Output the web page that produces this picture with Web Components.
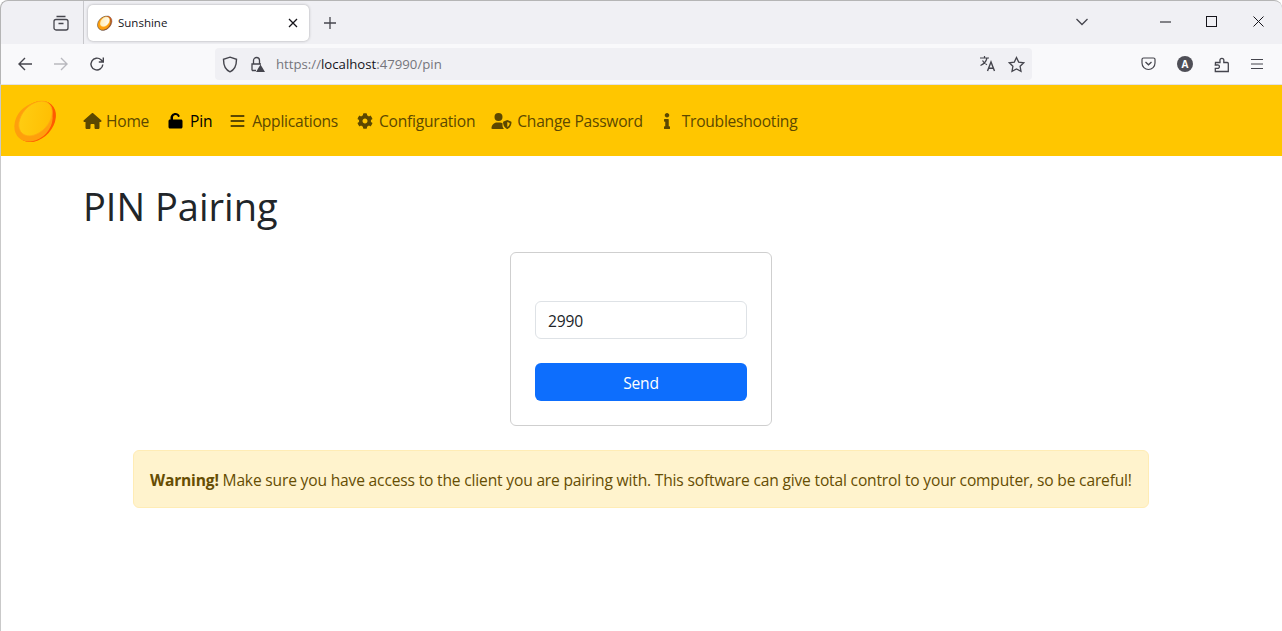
<!doctype html>
<html><head><meta charset="utf-8"><title>Sunshine</title>
<style>
html,body{margin:0;height:100%;background:#fff;overflow:hidden}
body{font-family:"Open Sans","Noto Sans",sans-serif;display:flex;flex-direction:column;height:631px;box-sizing:border-box}
</style></head><body>
<browser-chrome></browser-chrome>
<app-nav>
  <nav-link icon="home">Home</nav-link>
  <nav-link icon="unlock" active>Pin</nav-link>
  <nav-link icon="bars">Applications</nav-link>
  <nav-link icon="cog">Configuration</nav-link>
  <nav-link icon="user">Change Password</nav-link>
  <nav-link icon="info">Troubleshooting</nav-link>
</app-nav>
<pin-page></pin-page>
<script>
const logo=(id,inner1,inner2,rx=20,ry=13.5,cy=20.5)=>`<svg viewBox="0 0 44 46" width="100%" height="100%"><defs><linearGradient id="${id}" x1="0" y1="0" x2="1" y2="1"><stop offset="0" stop-color="${inner1}"/><stop offset="1" stop-color="${inner2}"/></linearGradient></defs>
<ellipse cx="22" cy="23.500" rx="23" ry="17" transform="rotate(-48 22 23.500)" fill="#ff5a00"/>
<ellipse cx="19.500" cy="24" rx="21.500" ry="17" transform="rotate(-48 19.500 24)" fill="#ff9f0c"/>
<ellipse cx="21.500" cy="${cy}" rx="${rx}" ry="${ry}" transform="rotate(-48 21.500 ${cy})" fill="url(#${id})" stroke="#ffa90f" stroke-width=".8"/></svg>`;
const ICONS={
home:['0 0 576 512','<path d="M575.8 255.5c0 18-15 32.100-32 32.100h-32l.7 160.200c0 2.700-.2 5.400-.5 8.100V472c0 22.100-17.900 40-40 40H456c-1.100 0-2.200 0-3.300-.1c-1.400 .1-2.800 .1-4.200 .1H416 392c-22.100 0-40-17.900-40-40V448 384c0-17.700-14.300-32-32-32H256c-17.700 0-32 14.300-32 32v64 24c0 22.100-17.900 40-40 40H160 128.100c-1.500 0-3-.1-4.500-.2c-1.200 .1-2.400 .2-3.600 .2H104c-22.100 0-40-17.900-40-40V360c0-.9 0-1.900 .1-2.800V287.600H32c-18 0-32-14-32-32.100c0-9 3-17 10-24L266.400 8c7-7 15-8 22-8s15 2 21 7L564.800 231.500c8 7 12 15 11 24z"/>',19],
unlock:['0 0 448 512','<path d="M144 144c0-44.200 35.800-80 80-80c31.900 0 59.400 18.600 72.300 45.700c7.600 16 26.700 22.800 42.600 15.200s22.800-26.700 15.200-42.600C331 33.700 281.500 0 224 0C135.600 0 64 71.600 64 160v48H48c-26.500 0-48 21.500-48 48V448c0 26.500 21.500 48 48 48H400c26.500 0 48-21.500 48-48V256c0-26.500-21.500-48-48-48H144V144z"/>',15],
bars:['0 0 448 512','<path d="M0 96c0-17.700 14.300-32 32-32H416c17.700 0 32 14.300 32 32s-14.300 32-32 32H32C14.300 128 0 113.700 0 96zM0 256c0-17.700 14.300-32 32-32H416c17.700 0 32 14.300 32 32s-14.300 32-32 32H32c-17.700 0-32-14.300-32-32zM448 416c0 17.700-14.300 32-32 32H32c-17.700 0-32-14.300-32-32s14.300-32 32-32H416c17.700 0 32 14.300 32 32z"/>',15],
cog:['0 0 512 512','<path d="M487.4 315.7l-42.600-24.600c4.300-23.200 4.300-47 0-70.200l42.600-24.600c4.900-2.800 7.100-8.600 5.500-14-11.100-35.600-30-67.800-54.700-94.600-3.800-4.100-10-5.100-14.800-2.300L380.8 110c-17.900-15.400-38.500-27.300-60.800-35.100V25.800c0-5.600-3.900-10.500-9.400-11.700-36.700-8.200-74.300-7.800-109.200 0-5.500 1.200-9.400 6.100-9.400 11.700V75c-22.200 7.900-42.800 19.800-60.800 35.100L88.700 85.500c-4.900-2.800-11-1.900-14.800 2.300-24.700 26.700-43.600 58.900-54.700 94.600-1.700 5.400.6 11.200 5.500 14L67.300 221c-4.300 23.200-4.300 47 0 70.200l-42.600 24.600c-4.900 2.800-7.100 8.600-5.500 14 11.100 35.600 30 67.800 54.700 94.600 3.800 4.100 10 5.100 14.800 2.300l42.600-24.600c17.900 15.400 38.500 27.300 60.800 35.100v49.200c0 5.600 3.900 10.500 9.400 11.700 36.700 8.200 74.300 7.800 109.200 0 5.500-1.200 9.400-6.100 9.400-11.700v-49.200c22.200-7.900 42.800-19.800 60.800-35.100l42.600 24.600c4.900 2.800 11 1.900 14.800-2.300 24.700-26.700 43.600-58.900 54.700-94.600 1.500-5.500-.7-11.300-5.600-14.100zM256 336c-44.100 0-80-35.900-80-80s35.900-80 80-80 80 35.900 80 80-35.900 80-80 80z"/>',16],
user:['0 0 640 512','<circle cx="224" cy="128" r="128"/><path d="M178 304h92c30 0 58 8 82 22v74c0 40 18 78 50 112H30c-17 0-30-13-30-30C0 384 80 304 178 304z"/><path fill-rule="evenodd" d="M505 224l118 47c10 4 17 13 17 24 0 70-30 170-126 214-6 3-13 3-19 0C399 465 370 365 370 295c0-11 7-20 17-24l118-47zm0 62v165c54-30 76-90 78-135l-78-30z"/>',21],
info:['0 0 192 512','<path d="M20 424.200h20V279.800H20c-11 0-20-9-20-20V212c0-11 9-20 20-20h112c11 0 20 9 20 20v212.200h20c11 0 20 9 20 20V492c0 11-9 20-20 20H20c-11 0-20-9-20-20v-47.800c0-11 9-20 20-20zM96 0C56 0 24 32 24 72s32 72 72 72 72-32 72-72S136 0 96 0z"/>',8]
};
class Base extends HTMLElement{
  constructor(){super();this.attachShadow({mode:'open'});}
}
class BrowserChrome extends Base{connectedCallback(){this.shadowRoot.innerHTML=`<style>
:host{display:block;flex:none;color:#15141a;font-family:"Open Sans",sans-serif}
svg{display:block;fill:none;stroke:#45454d;stroke-width:1.300}
.tabs{height:44px;background:#f0f0f4;display:flex;align-items:center;box-sizing:border-box;border-top:1px solid #b5b5b5;border-left:1px solid #b5b5b5;border-radius:8px 8px 0 0}
.tabview{width:83px;align-self:stretch;display:flex;align-items:center;justify-content:flex-end;padding-right:13px;box-sizing:border-box;border-right:1px solid #c8c8cc}
.tab{margin-left:4px;width:221px;height:36px;margin-top:1px;background:#fff;border-radius:5px;box-shadow:0 0 3px rgba(0,0,0,.3);display:flex;align-items:center;padding:0 9px 1px;box-sizing:border-box}
.fav{width:16px;height:16px;flex:none}
.tt{font-size:11.500px;margin-left:5px;flex:1;line-height:14px}
.x{margin-right:1px}
.plus{margin-left:14px}
.sp{flex:1}
.win{display:flex;align-items:center;margin-bottom:2px}
.chev{margin-right:71px}
.w1{margin-right:35px}
.w2{margin-right:36px}
.w3{margin-right:18px}
.bar{height:41px;background:#f9f9fb;display:flex;align-items:center;box-sizing:border-box;border-left:1px solid #b5b5b5;border-bottom:1px solid #e2e2e4}
.back{margin-left:16px}.fwd{margin-left:20px}.rel{margin-left:20px}
.url{margin-left:110px;width:817px;height:32px;background:#f0f0f4;border-radius:4px;display:flex;align-items:center;padding:0 7px 0 7px;box-sizing:border-box;font-size:13.200px;color:#75757c}
.url b{font-weight:400;color:#15141a}
.lock{margin-left:11px}
.addr{margin-left:11px;flex:1;white-space:nowrap}
.tools{display:flex;align-items:center;margin-left:109px}
</style>
<div class="tabs">
 <div class="tabview"><svg width="18" height="18" viewBox="0 0 18 18"><rect x="2" y="5.500" width="14" height="10.500" rx="2"/><path d="M4.500 2.500h9M6.500 9.500h5"/></svg></div>
 <div class="tab"><span class="fav">${logo('g1','#ffe9a8','#fff',16.500,11.500,19.500)}</span><span class="tt">Sunshine</span>
  <svg class="x" width="12" height="12" viewBox="0 0 12 12"><path d="M2 2l8 8M10 2l-8 8" stroke="#15141a"/></svg></div>
 <svg class="plus" width="14" height="14" viewBox="0 0 14 14"><path d="M7 1v12M1 7h12"/></svg>
 <span class="sp"></span>
 <div class="win">
  <svg class="chev" width="14" height="10" viewBox="0 0 14 10"><path d="M1.500 2l5.500 5.500L12.500 2"/></svg>
  <svg class="w1" width="11" height="10" viewBox="0 0 11 10"><path d="M0 5h11" stroke="#15141a" stroke-width="1"/></svg>
  <svg class="w2" width="11" height="11" viewBox="0 0 11 11"><rect x=".5" y=".5" width="10" height="10" stroke="#15141a" stroke-width="1"/></svg>
  <svg class="w3" width="11" height="11" viewBox="0 0 11 11"><path d="M.5.5l10 10M10.500.5l-10 10" stroke="#15141a" stroke-width="1"/></svg>
 </div>
</div>
<div class="bar">
 <svg class="back" width="16" height="16" viewBox="0 0 16 16"><path d="M15 8H2M8 2L2 8l6 6" stroke-width="1.400"/></svg>
 <svg class="fwd" width="16" height="16" viewBox="0 0 16 16"><path d="M1 8h13M8 2l6 6-6 6" stroke="#b9b9bf" stroke-width="1.400"/></svg>
 <svg class="rel" width="16" height="16" viewBox="0 0 16 16"><path d="M13.800 8.500A5.900 5.900 0 1 1 12 3.800L14 6M14.300 1.500V6H9.800" stroke-width="1.400"/></svg>
 <div class="url">
  <svg width="16" height="17" viewBox="0 0 16 17"><path d="M8 1.200l6.500 2.100c0 6-1.500 10.500-6.500 12.500C3 13.800 1.500 9.300 1.500 3.300L8 1.200z" stroke-width="1.400"/></svg>
  <svg class="lock" width="16" height="17" viewBox="0 0 16 17"><path d="M3 14.500V8h9M4.500 8V4.500a3 3 0 0 1 6 0V8M3 14.500h4" stroke-width="1.300"/><path d="M11.500 8.500l4.500 7.500H7z" fill="#45454d" stroke="none"/></svg>
  <span class="addr">https://<b>localhost</b>:47990/pin</span>
  <svg width="18" height="18" viewBox="0 0 18 18"><path d="M1 3h9M5.500 1v2M8 3c-.8 3.500-3 6-6.500 7.500M3.500 5.500c1 2 2.800 3.500 4.500 4.200" stroke-width="1.200"/><path d="M8.500 16l3.500-9 3.500 9M9.700 13.200h4.600" stroke-width="1.400"/></svg>
  <svg style="margin-left:11px" width="17" height="17" viewBox="0 0 17 17"><path d="M8.500 1.500l2.200 4.600 5 .7-3.600 3.500.9 5-4.500-2.400L4 15.300l.9-5L1.300 6.800l5-.7z" stroke-width="1.300"/></svg>
 </div>
 <div class="tools">
  <svg width="15" height="14" viewBox="0 0 15 14"><path d="M2.500 1h10A1.500 1.500 0 0 1 14 2.500V6a6.500 6.500 0 0 1-13 0V2.500A1.500 1.500 0 0 1 2.500 1z" stroke-width="1.200"/><path d="M4.500 5l3 2.800 3-2.800" stroke-width="1.300"/></svg>
  <svg style="margin-left:21px" width="16" height="16" viewBox="0 0 16 16"><circle cx="8" cy="8" r="8" fill="#4f4f57" stroke="none"/><text x="8" y="11.500" text-anchor="middle" font-size="10" font-weight="700" font-family="Open Sans" fill="#fff" stroke="none">A</text></svg>
  <svg style="margin-left:21px" width="16" height="17" viewBox="0 0 16 17"><path d="M1.500 6.500H6V5a2 2 0 1 1 3.800 0v1.500h3.500a1 1 0 0 1 1 1v8h-13v-3.200h2a1.700 1.700 0 1 0 0-3.300h-2z" stroke-width="1.300"/></svg>
  <svg style="margin-left:20px" width="14" height="12" viewBox="0 0 14 12"><path d="M1 1.500h12M1 6h12M1 10.500h12" stroke-width="1.200"/></svg>
 </div>
</div>`;}}
class AppNav extends Base{connectedCallback(){this.shadowRoot.innerHTML=`<style>
:host{display:flex;flex:none;height:71px;align-items:center;background:#ffc600;padding-left:14px;box-shadow:inset 1px 0 #c9c9c9}
.logo{width:44px;height:46px;margin-right:25px;flex:none}
.links{display:flex;align-items:center}
</style><div class="logo">${logo('g2','#ffcf14','#ffbc00')}</div><div class="links"><slot></slot></div>`;}}
class NavLink extends Base{connectedCallback(){const k=this.getAttribute('icon');const [vb,body,w]=ICONS[k];const a=this.hasAttribute('active');
const gap={home:4,unlock:7,bars:7,cog:6,user:5,info:11};const mr={home:19,unlock:18,bars:19,cog:16,user:20,info:0};
this.shadowRoot.innerHTML=`<style>
:host{display:flex;align-items:center;font-size:15.600px;letter-spacing:-.25px;line-height:24px;color:${a?'#000':'#5c4800'};margin-right:${mr[k]}px;white-space:nowrap}
svg{display:block;fill:currentColor;flex:none;height:16px;width:${w}px}
.t{margin-left:${gap[k]}px}
</style><svg viewBox="${vb}">${body}</svg><span class="t"><slot></slot></span>`;}}
class PinPage extends Base{connectedCallback(){this.shadowRoot.innerHTML=`<style>
:host{display:block;flex:1;font-size:15.600px;color:#212529;box-shadow:inset 1px 0 #c9c9c9}
.wrap{width:1116px;margin:0 auto;box-sizing:border-box}
h1{margin:26px 0 22px;font-size:38px;line-height:48px;font-weight:400}
.form-row{display:flex;justify-content:center}
</style><div class="wrap"><h1>PIN Pairing</h1><div class="form-row"><pin-card></pin-card></div><warn-alert><b>Warning!</b> Make sure you have access to the client you are pairing with. This software can give total control to your computer, so be careful!</warn-alert></div>`;}}
class PinCard extends Base{connectedCallback(){this.shadowRoot.innerHTML=`<style>
:host{display:flex;flex-direction:column;width:262px;height:174px;box-sizing:border-box;border:1px solid #cfcfcf;border-radius:6px;padding:48px 24px 24px}
input{font:inherit;font-size:15.600px;letter-spacing:-.18px;height:38px;box-sizing:border-box;width:100%;border:1px solid #dee2e6;border-radius:6px;padding:1px 12px 0;color:#212529;outline:0;background:#fff}
button{font:inherit;font-size:15.600px;letter-spacing:-.18px;height:38px;margin-top:24px;background:#0d6efd;color:#fff;border:0;border-radius:6px;padding:1px 0 0}
</style><input value="2990"><button>Send</button>`;}}
class WarnAlert extends Base{connectedCallback(){this.shadowRoot.innerHTML=`<style>
:host{display:block;width:1016px;height:58px;box-sizing:border-box;margin:24px auto 0;background:#fff3cd;border:1px solid #ffecb5;border-radius:6px;color:#664d03;padding:17px 16px 0;line-height:24px;font-size:15.600px;letter-spacing:-.18px;white-space:nowrap}
</style><slot></slot>`;}}
customElements.define('browser-chrome',BrowserChrome);
customElements.define('app-nav',AppNav);
customElements.define('nav-link',NavLink);
customElements.define('pin-page',PinPage);
customElements.define('pin-card',PinCard);
customElements.define('warn-alert',WarnAlert);
</script>
</body></html>
